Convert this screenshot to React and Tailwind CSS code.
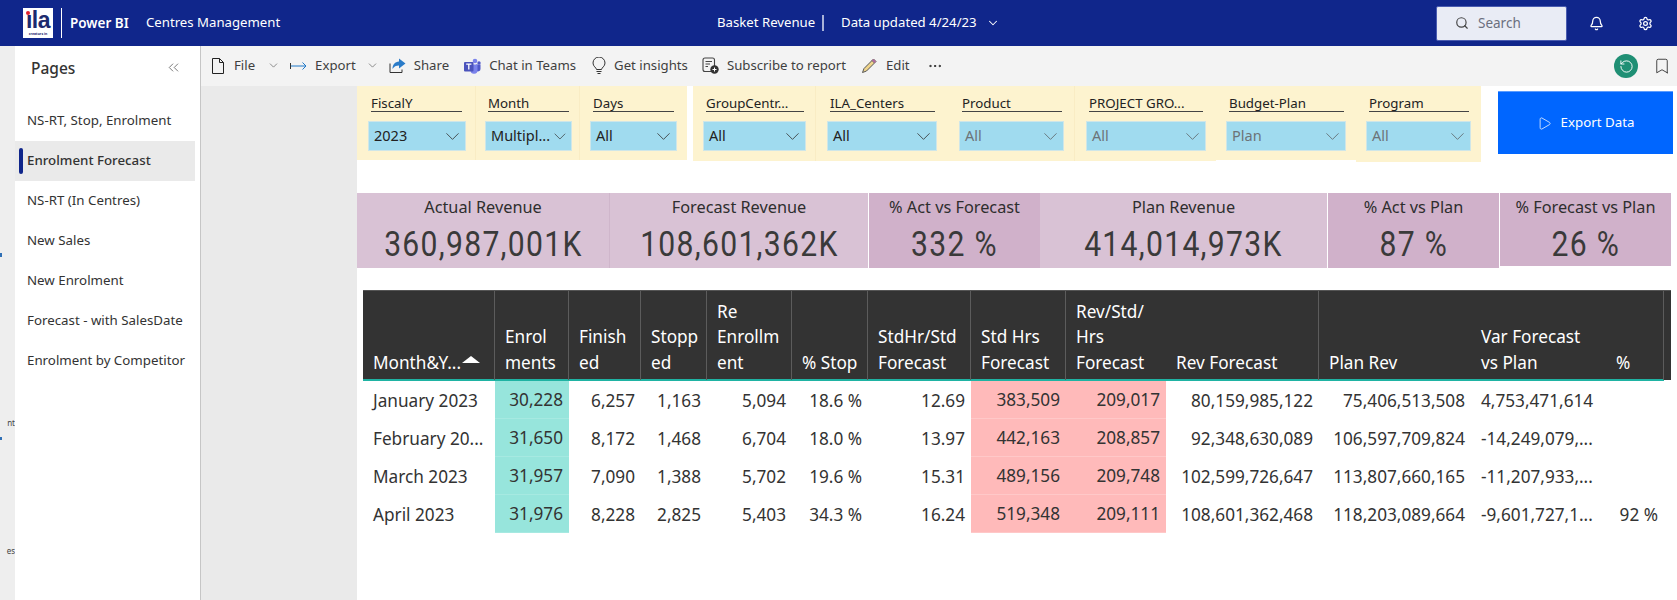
import React from "react";
import { ChevronDown, ChevronsLeft, Search, Bell, Settings, Bookmark, RotateCcw, Play, MoreHorizontal } from "lucide-react";

const font = { fontFamily: '"Noto Sans", sans-serif' };

function Logo() {
  return (
    <div className="relative w-[30px] h-[30px] bg-white flex flex-col items-center overflow-hidden">
      <span className="text-[#1c2a6e] font-bold text-[23px] leading-[24px] tracking-[-0.5px]" style={{ fontFamily: '"Liberation Sans", sans-serif' }}>ıla</span>
      <span className="text-[#1c2a6e] text-[3.5px] leading-[4px] font-bold">creators in</span>
      <span className="absolute left-[3px] top-[3px] w-[4px] h-[4px] rounded-full bg-[#e0202c]" />
    </div>
  );
}

function TopBar() {
  return (
    <div className="h-[46px] bg-[#10268b] flex items-center text-white text-[13.5px] shrink-0">
      <div className="ml-[23px]"><Logo /></div>
      <div className="ml-[8px] w-px h-[30px] bg-white" />
      <div className="ml-[8px] font-semibold w-[76px]">Power BI</div>
      <div className="text-[13.2px] w-[571px]">Centres Management</div>
      <div className="text-[13.2px] w-[105px]">Basket Revenue</div>
      <div className="w-[2px] h-[16px] bg-[#a9b2d8]" />
      <div className="ml-[17px] text-[13.2px] w-[145px]">Data updated 4/24/23</div>
      <ChevronDown size={14} strokeWidth={1.8} />
      <div className="ml-[436px] w-[131px] h-[35px] bg-[#e9ecf5] border border-[#4a5cb0] rounded-[2px] flex items-center pl-[18px] gap-[9px] text-[#6b6f7e] text-[13.5px]">
        <Search size={14} className="text-[#444]" />
        <span>Search</span>
      </div>
      <Bell size={15} className="ml-[22px]" />
      <Settings size={15} className="ml-[34px]" />
    </div>
  );
}

function Pages() {
  const rows = ["NS-RT, Stop, Enrolment", "Enrolment Forecast", "NS-RT (In Centres)", "New Sales", "New Enrolment", "Forecast - with SalesDate", "Enrolment by Competitor"];
  return (
    <div className="flex shrink-0">
      <div className="w-[15px] bg-[#eeeeee] text-[8px] text-[#444] flex flex-col items-end">
        <span className="mt-[207px] self-start w-[2px] h-[4px] bg-[#2f6fb5]" />
        <span className="mt-[161px] leading-[10px]">nt</span>
        <span className="mt-[9px] self-start w-[2px] h-[3px] bg-[#2f6fb5]" />
        <span className="mt-[106px] leading-[10px]">es</span>
      </div>
      <div className="w-[186px] bg-white border-r border-[#c6c6c6] flex flex-col">
        <div className="h-[55px] flex items-center justify-between pl-[16px] pr-[18px] pb-[9px]">
          <span className="text-[15.5px] text-[#333] font-medium">Pages</span>
          <ChevronsLeft size={17} strokeWidth={1.1} className="text-[#555] -mt-[3px]" />
        </div>
        {rows.map((r, i) => (
          <div key={r} className={"h-[40px] w-[180px] flex items-center pl-[4px] text-[13.3px] text-[#333] " + (i === 1 ? "bg-[#eaeaea] font-medium" : "")}>
            <span className={"w-[4px] h-[26px] rounded-[2px] mr-[4px] " + (i === 1 ? "bg-[#10268b]" : "")} />
            {r}
          </div>
        ))}
      </div>
    </div>
  );
}

function ToolItem({ icon, label, chevron, ml, gap = "gap-[8px]" }) {
  return (
    <div className={"flex items-center text-[13.2px] text-[#3f3f3f] " + gap + " " + ml}>
      {icon}
      <span>{label}</span>
      {chevron && <ChevronDown size={13} strokeWidth={1.2} className="text-[#555] ml-[2px]" />}
    </div>
  );
}

function Toolbar() {
  return (
    <div className="h-[40px] bg-[#f3f3f3] flex items-center">
      <ToolItem ml="ml-[11px]" gap="gap-[10px]" icon={
        <svg width="12" height="16" viewBox="0 0 12 16" fill="none" stroke="#222" strokeWidth="1"><path d="M.5.500h7l4 4v11H.5zM7.500.500v4h4" /></svg>
      } label="File" chevron />
      <ToolItem ml="ml-[10px]" icon={
        <svg width="17" height="12" viewBox="0 0 17 12" fill="none" stroke="#1f78c8" strokeWidth="1"><path d="M.5 3v6" stroke="#333" /><path d="M1 6h15M12.500 2.500 16 6l-3.500 3.500" /></svg>
      } label="Export" chevron />
      <ToolItem ml="ml-[10px]" icon={
        <svg width="17" height="15" viewBox="0 0 17 15" fill="none"><path d="M10 .500 16.500 5.500 10 10.500V7.500C7 7.500 5 8.500 3.500 11 3.500 6.500 6 3.800 10 3.500z" fill="#2a7bc8" /><path d="M1 5.500v9h12v-3" stroke="#333" strokeWidth="1" /></svg>
      } label="Share" />
      <ToolItem ml="ml-[15px]" icon={
        <svg width="17" height="16" viewBox="0 0 17 16"><circle cx="11" cy="3" r="2.300" fill="#7b83eb" /><circle cx="15" cy="5" r="1.700" fill="#5059c9" /><path d="M12 6.500h4.500V11a2.500 2.500 0 0 1-4.500 1.500z" fill="#5059c9" /><path d="M5 6.500h8.500V12a3.500 3.500 0 0 1-7 .5z" fill="#7b83eb" /><rect x="0" y="4" width="9.500" height="9.500" rx="1" fill="#4b53bc" /><path d="M2.200 6.200h5.200M4.800 6.200v5.200" stroke="#fff" strokeWidth="1.300" /></svg>
      } label="Chat in Teams" />
      <ToolItem ml="ml-[16px]" icon={
        <svg width="14" height="18" viewBox="0 0 14 18" fill="none" stroke="#333" strokeWidth="1"><path d="M4.500 12.500C4.300 10.500 1 9.500 1 6a6 6 0 0 1 12 0c0 3.500-3.300 4.500-3.500 6.500z" /><path d="M4.500 14.500h5M5.500 16.500h3" /></svg>
      } label="Get insights" />
      <ToolItem ml="ml-[14px]" icon={
        <svg width="17" height="17" viewBox="0 0 17 17" fill="none"><rect x="1" y="1" width="11.500" height="13.500" rx="2" stroke="#444" strokeWidth="1.100" /><path d="M3.500 4.500h6.500M3.500 7h4.500M3.500 9.500h2.500" stroke="#444" /><circle cx="12.500" cy="12.500" r="4.200" fill="#333" /><path d="M12.500 10.500v4M10.500 12.500h4" stroke="#fff" /></svg>
      } label="Subscribe to report" />
      <ToolItem ml="ml-[15px]" icon={
        <svg width="17" height="17" viewBox="0 0 17 17" fill="none"><path d="M12.500 2 15 4.500 5.500 14l-4 1.500L3 11.500z" fill="#f0d58c" stroke="#555" strokeWidth="1" /><path d="M11 3.500 13.500 6" stroke="#555" /><path d="M12.500 2 15 4.500l-1.500 1.500L11 3.500z" fill="#b06aa0" /></svg>
      } label="Edit" />
      <MoreHorizontal size={16} strokeWidth={1.5} className="ml-[17px] text-[#222]" />
      <div className="ml-auto flex items-center">
        <div className="w-[24px] h-[24px] rounded-full bg-[#1f8f74] flex items-center justify-center">
          <RotateCcw size={15} className="text-white" strokeWidth={1.5} />
        </div>
        <Bookmark size={18} strokeWidth={1.1} className="ml-[15px] mr-[6px] text-[#222]" />
      </div>
    </div>
  );
}

function Slicer({ label, value, muted, w, h = "h-full", labelW, ddW, pl = "pl-[10px]", border = true }) {
  return (
    <div className={"shrink-0 bg-[#fdf3cf] pt-[8px] " + w + " " + h + " " + pl + (border ? " border-r border-[#f9ecc4]" : "")}>
      <div className={"ml-[3px] h-[18px] border-b border-[#444] text-[13.3px] leading-[18px] text-[#222] whitespace-nowrap " + labelW}>{label}</div>
      <div className={"mt-[9px] h-[30px] bg-[#a0dbef] border border-[#cfe6e8] flex items-center justify-between pl-[5px] pr-[1px] text-[14.500px] " + ddW + (muted ? " text-[#6c7378]" : " text-[#222]")}>
        <span>{value}</span>
        <ChevronDown size={23} strokeWidth={0.85} className={muted ? "text-[#5d6468]" : "text-[#333]"} />
      </div>
    </div>
  );
}

function Slicers() {
  return (
    <div className="h-[76px] flex items-start">
      <div className="flex h-[74px]">
        <Slicer label="FiscalY" value="2023" w="w-[119px]" pl="pl-[11px]" labelW="w-[91px]" ddW="w-[98px]" />
        <Slicer label="Month" value="Multipl..." w="w-[104px]" pl="pl-[9px]" labelW="w-[81px]" ddW="w-[87px]" />
        <Slicer label="Days" value="All" w="w-[107px]" labelW="w-[81px]" ddW="w-[87px]" border={false} />
      </div>
      <div className="ml-[6px] flex items-start h-[76px]">
        <Slicer label="GroupCentr..." value="All" w="w-[123px]" h="h-[75px]" labelW="w-[98px]" ddW="w-[103px]" />
        <Slicer label="ILA_Centers" value="All" w="w-[132px]" h="h-[75px]" pl="pl-[11px]" labelW="w-[105px]" ddW="w-[110px]" border={false} />
        <Slicer label="Product" value="All" muted w="w-[127px]" h="h-[75px]" pl="pl-[11px]" labelW="w-[100px]" ddW="w-[105px]" />
        <Slicer label="PROJECT GRO..." value="All" muted w="w-[141px]" h="h-[75px]" pl="pl-[11px]" labelW="w-[114px]" ddW="w-[120px]" border={false} />
        <Slicer label="Budget-Plan" value="Plan" muted w="w-[140px]" h="h-[74px]" labelW="w-[115px]" ddW="w-[120px]" border={false} />
        <Slicer label="Program" value="All" muted w="w-[125px]" h="h-[76px]" labelW="w-[100px]" ddW="w-[105px]" border={false} />
      </div>
      <button className="ml-[17px] mt-[5px] w-[175px] h-[63px] bg-[#0066ff] border-t border-[#5a9cff] flex items-center justify-center gap-[9px] text-white text-[13.3px]">
        <Play size={15} strokeWidth={1.2} />
        <span>Export Data</span>
      </button>
    </div>
  );
}

function Kpi({ title, value, w, dark, h = "h-[75px]" }) {
  return (
    <div className={"shrink-0 flex flex-col items-center overflow-hidden " + w + " " + h + " " + (dark ? "bg-[#d0b1ca]" : "bg-[#d9c2d5]")}>
      <div className="mt-[3px] text-[16.300px] leading-[22px] text-[#2e2e2e] whitespace-nowrap">{title}</div>
      <div className="mt-[7px] text-[35px] leading-[40px] text-[#3a3a3a] tracking-[1.500px] whitespace-nowrap scale-x-[0.86]" style={{ fontFamily: 'Roboto, sans-serif' }}>{value}</div>
    </div>
  );
}

function Kpis() {
  return (
    <div className="mt-[31px] flex items-start">
      <Kpi title="Actual Revenue" value="360,987,001K" w="w-[252px]" />
      <div className="w-px h-[75px] bg-[#cfb6cb]" />
      <Kpi title="Forecast Revenue" value="108,601,362K" w="w-[258px]" />
      <div className="w-[1px] h-[75px] bg-white" />
      <Kpi title="% Act vs Forecast" value="332 %" dark w="w-[171px]" />
      <Kpi title="Plan Revenue" value="414,014,973K" w="w-[287px]" />
      <div className="w-[1px] h-[75px] bg-white" />
      <Kpi title="% Act vs Plan" value="87 %" dark w="w-[171px]" />
      <div className="w-[1px] h-[75px] bg-white" />
      <Kpi title="% Forecast vs Plan" value="26 %" dark w="w-[171px]" h="h-[73px]" />
    </div>
  );
}

const GRID = "grid grid-cols-[132px_74px_72px_66px_85px_76px_103px_95px_100px_153px_152px_135px_58px_7px]";

const HEAD = [
  { t: ["Month&Y..."], sort: true, b: true },
  { t: ["Enrol", "ments"], b: true },
  { t: ["Finish", "ed"], b: true },
  { t: ["Stopp", "ed"], b: true },
  { t: ["Re", "Enrollm", "ent"], b: true },
  { t: ["% Stop"], b: true },
  { t: ["StdHr/Std", "Forecast"], b: true },
  { t: ["Std Hrs", "Forecast"], b: true },
  { t: ["Rev/Std/", "Hrs", "Forecast"], b: false },
  { t: ["Rev Forecast"], b: true },
  { t: ["Plan Rev"], b: false },
  { t: ["Var Forecast", "vs Plan"], b: false },
  { t: ["%"], b: true },
];

const ROWS = [
  ["January 2023", "30,228", "6,257", "1,163", "5,094", "18.6 %", "12.69", "383,509", "209,017", "80,159,985,122", "75,406,513,508", "4,753,471,614", ""],
  ["February 20...", "31,650", "8,172", "1,468", "6,704", "18.0 %", "13.97", "442,163", "208,857", "92,348,630,089", "106,597,709,824", "-14,249,079,...", ""],
  ["March 2023", "31,957", "7,090", "1,388", "5,702", "19.6 %", "15.31", "489,156", "209,748", "102,599,726,647", "113,807,660,165", "-11,207,933,...", ""],
  ["April 2023", "31,976", "8,228", "2,825", "5,403", "34.3 %", "16.24", "519,348", "209,111", "108,601,362,468", "118,203,089,664", "-9,601,727,1...", "92 %"],
];

function Table() {
  return (
    <div className="mt-[22px] ml-[6px] w-[1308px]">
      <div className={GRID + " h-[90px] bg-[#333333] border-t border-[#555] text-white text-[17.200px] leading-[25.500px] pt-0"}>
        {HEAD.map((h, i) => (
          <div key={i} className={"flex flex-col justify-end pb-[5px] pl-[10px] " + (h.b ? "border-r border-[#5c5c5c]" : "")}>
            {h.t.map((l) => (
              <div key={l} className="whitespace-nowrap flex items-center">
                {l}
                {h.sort && <span className="ml-[1px] -mt-[6px] w-0 h-0 border-x-[9px] border-x-transparent border-b-[7px] border-b-white" />}
              </div>
            ))}
          </div>
        ))}
        <div />
      </div>
      <div className="h-[2px] bg-[#1fb3a3] -mt-[1px] w-[1301px]" />
      {ROWS.map((r, ri) => (
        <div key={ri} className={GRID + " h-[38px] text-[17.200px] text-[#333]"}>
          {r.map((c, i) => (
            <div key={i} className={"flex items-center whitespace-nowrap pt-[1px] " +
              (i === 0 ? "pl-[10px] " : i === 11 ? "justify-start pl-[10px] " : "justify-end pr-[6px] ") +
              (i === 1 ? "bg-[#97e5dc] border-b border-[#a6e9e1] " : "") +
              (i === 7 || i === 8 ? "bg-[#ffbaba] border-b border-[#ffc8c8] " : "")}>
              {c}
            </div>
          ))}
        </div>
      ))}
    </div>
  );
}

export default function App() {
  return (
    <div className="w-[1677px] h-[600px] overflow-hidden flex flex-col bg-white" style={font}>
      <TopBar />
      <div className="flex flex-1 min-h-0">
        <Pages />
        <div className="flex-1 flex flex-col min-w-0">
          <Toolbar />
          <div className="flex flex-1 min-h-0">
            <div className="w-[156px] bg-[#eaeaea] shrink-0" />
            <div className="flex-1 bg-white min-w-0">
              <Slicers />
              <Kpis />
              <Table />
            </div>
          </div>
        </div>
      </div>
    </div>
  );
}
